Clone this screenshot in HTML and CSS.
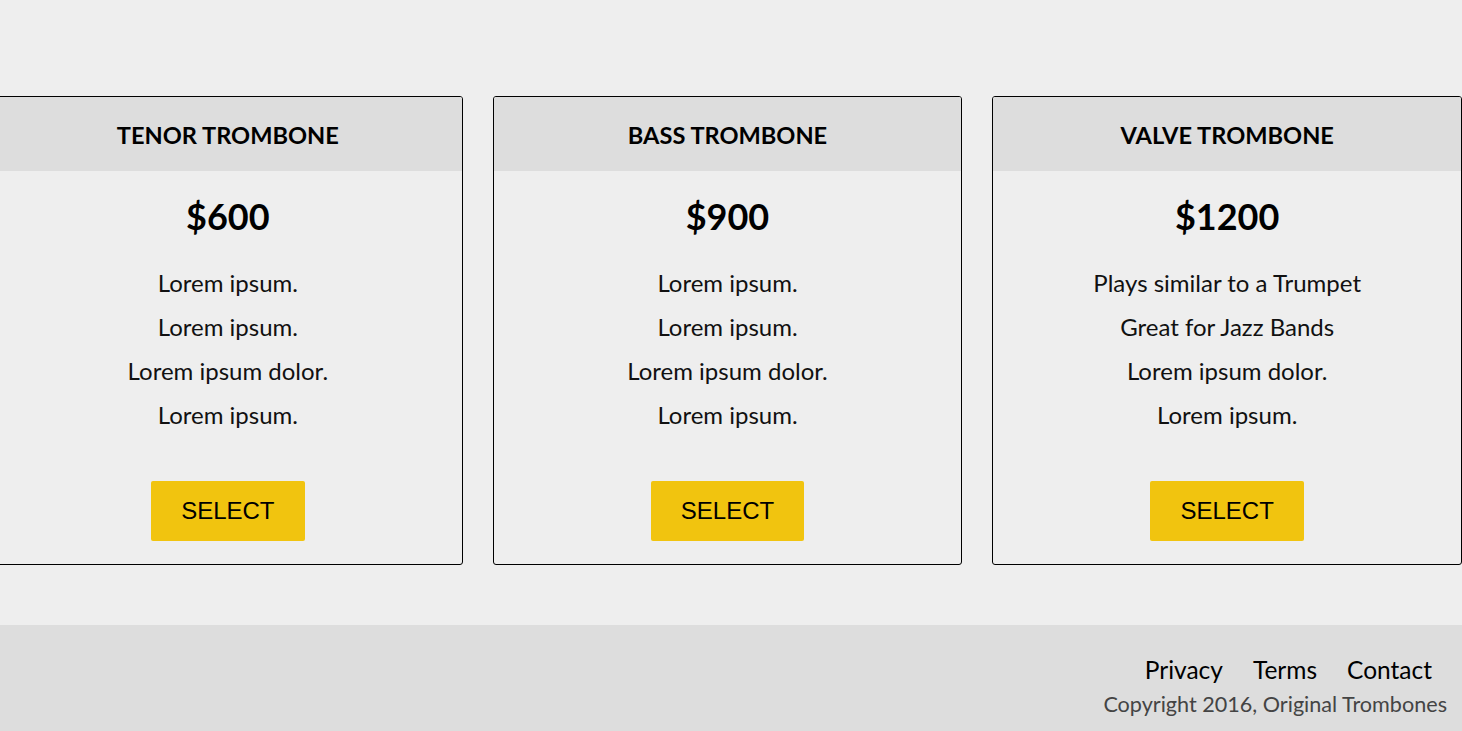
FILE: index.html
```html
<!DOCTYPE html>
<html lang="en">
<head>
<meta charset="utf-8">
<title>Original Trombones - Pricing</title>
<link rel="stylesheet" href="styles.css">
</head>
<body>
<section class="pricing">
  <div class="product">
    <div class="level">Tenor Trombone</div>
    <h2 class="price">$600</h2>
    <ol class="features">
      <li>Lorem ipsum.</li>
      <li>Lorem ipsum.</li>
      <li>Lorem ipsum dolor.</li>
      <li>Lorem ipsum.</li>
    </ol>
    <button class="btn">Select</button>
  </div>
  <div class="product">
    <div class="level">Bass Trombone</div>
    <h2 class="price">$900</h2>
    <ol class="features">
      <li>Lorem ipsum.</li>
      <li>Lorem ipsum.</li>
      <li>Lorem ipsum dolor.</li>
      <li>Lorem ipsum.</li>
    </ol>
    <button class="btn">Select</button>
  </div>
  <div class="product">
    <div class="level">Valve Trombone</div>
    <h2 class="price">$1200</h2>
    <ol class="features">
      <li>Plays similar to a Trumpet</li>
      <li>Great for Jazz Bands</li>
      <li>Lorem ipsum dolor.</li>
      <li>Lorem ipsum.</li>
    </ol>
    <button class="btn">Select</button>
  </div>
</section>
<footer class="footer">
  <ul class="links">
    <li><a href="#">Privacy</a></li>
    <li><a href="#">Terms</a></li>
    <li><a href="#">Contact</a></li>
  </ul>
  <span class="copyright">Copyright 2016, Original Trombones</span>
</footer>
</body>
</html>
```
FILE: styles.css
```css
html, body {
  margin: 0;
  padding: 0;
}
body {
  background: #eee;
  font-family: Lato, "Open Sans", sans-serif;
  color: #000;
  overflow: hidden;
}
.pricing {
  display: flex;
  gap: 30px;
  margin: 96px 0 0 -7px;
}
.product {
  flex: 1 1 0;
  text-align: center;
  border: 1px solid #000;
  border-radius: 3px;
  overflow: hidden;
  padding-bottom: 23.5px;
}
.level {
  background: #ddd;
  padding: 24px 0 21px;
  font-size: 23.6px;
  line-height: 28.8px;
  font-weight: 700;
  text-transform: uppercase;
}
.price {
  margin: 24px 0 0;
  font-size: 36px;
  line-height: 43px;
  font-weight: 700;
}
.features {
  list-style: none;
  margin: 23px 0 0;
  padding: 0;
}
.features li {
  font-size: 24px;
  line-height: 44px;
  color: #111;
}
.btn {
  margin-top: 44px;
  background: #f1c40f;
  border: 0;
  border-radius: 2px;
  padding: 16px 30px;
  font-family: "Liberation Sans", Arial, sans-serif;
  font-size: 24px;
  line-height: 28px;
  color: #000;
  text-transform: uppercase;
}
.footer {
  margin-top: 60px;
  background: #ddd;
  padding: 31px 15px 20px;
}
.links {
  display: flex;
  justify-content: flex-end;
  list-style: none;
  margin: 0;
  padding: 0;
}
.links li {
  padding: 0 15px;
  font-size: 24.5px;
  line-height: 28.8px;
}
.links a {
  color: #000;
  text-decoration: none;
}
.copyright {
  display: flex;
  justify-content: flex-end;
  margin-top: 6px;
  font-size: 21.6px;
  color: #444;
}
```
